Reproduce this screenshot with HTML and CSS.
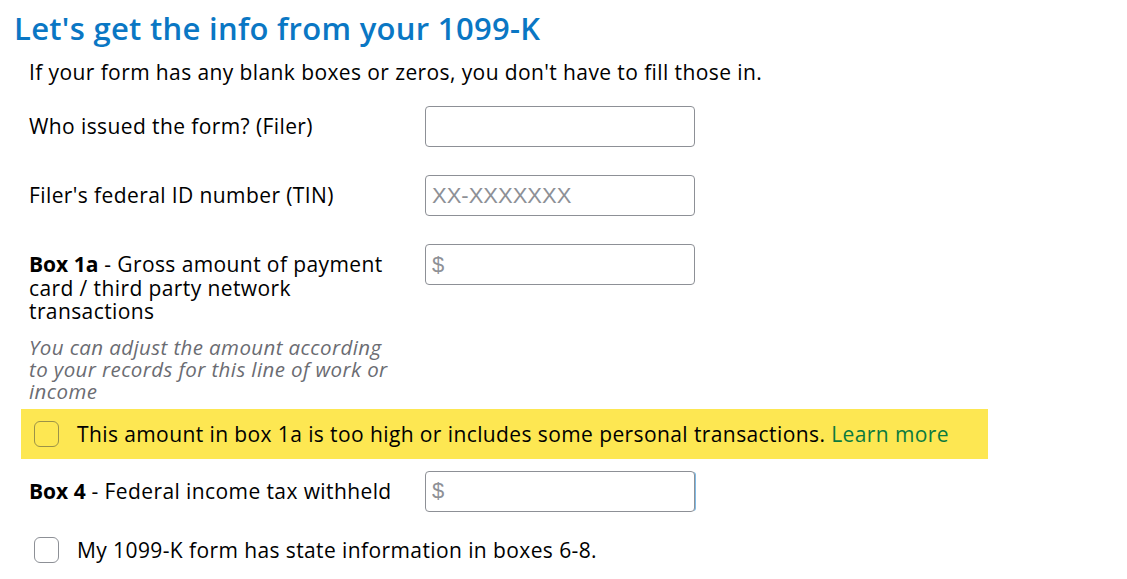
FILE: index.html
```html
<!DOCTYPE html>
<html lang="en">
<head>
<meta charset="utf-8">
<title>1099-K</title>
<link rel="stylesheet" href="styles.css">
</head>
<body>
<main class="page">
  <h1 class="title">Let's get the info from your 1099-K</h1>
  <p class="intro">If your form has any blank boxes or zeros, you don't have to fill those in.</p>

  <div class="row">
    <label class="label" for="filer">Who issued the form? (Filer)</label>
    <input class="field" id="filer" type="text">
  </div>

  <div class="row">
    <label class="label" for="tin">Filer's federal ID number (TIN)</label>
    <input class="field" id="tin" type="text" placeholder="XX-XXXXXXX">
  </div>

  <div class="row">
    <div class="label-block">
      <label class="label" for="box1a"><b>Box 1a</b> - Gross amount of payment card / third party network transactions</label>
      <p class="helper">You can adjust the amount according to your records for this line of work or income</p>
    </div>
    <input class="field" id="box1a" type="text" placeholder="$">
  </div>

  <div class="notice">
    <span class="check check-yellow"></span>
    <span class="notice-text">This amount in box 1a is too high or includes some personal transactions. <a class="link" href="#">Learn more</a></span>
  </div>

  <div class="row row-box4">
    <label class="label label-nowrap" for="box4"><b>Box 4</b> - Federal income tax withheld</label>
    <input class="field field-focus" id="box4" type="text" placeholder="$">
  </div>

  <div class="check-row">
    <span class="check"></span>
    <span class="check-text">My 1099-K form has state information in boxes 6-8.</span>
  </div>
</main>
</body>
</html>
```

FILE: styles.css
```css
* { box-sizing: border-box; }

body {
  margin: 0;
  background: #fff;
  font-family: "Open Sans", "Noto Sans", sans-serif;
  color: #000;
}

.page {
  padding: 8px 0 0 14px;
  width: 1127px;
}

.title {
  margin: 0;
  font-size: 31px;
  line-height: 40px;
  font-weight: 600;
  letter-spacing: 0.3px;
  color: #0a77c4;
}

.intro {
  margin: 12px 0 0 15px;
  font-size: 21px;
  line-height: 24px;
  letter-spacing: 0.4px;
}

.row {
  display: grid;
  grid-template-columns: 396px 270px;
  margin: 22px 0 0 15px;
  align-items: start;
}

.row + .row { margin-top: 28px; }

.label {
  display: block;
  padding-top: 9px;
  font-size: 21px;
  line-height: 23.5px;
  letter-spacing: 0.4px;
  max-width: 362px;
}

.label-nowrap {
  max-width: none;
  white-space: nowrap;
}

.label b { font-weight: 700; letter-spacing: 0; }

.helper {
  margin: 12px 0 0;
  max-width: 366px;
  font-size: 20.5px;
  line-height: 22px;
  letter-spacing: 0.4px;
  font-style: italic;
  color: #6b6c72;
}

.field {
  width: 270px;
  height: 41px;
  border: 1px solid #8d9096;
  border-radius: 4px;
  padding: 0 6px;
  font-family: "Liberation Sans", Arial, sans-serif;
  font-size: 22px;
  background: #fff;
}

.field::placeholder { color: #8d9096; }

.field-focus { box-shadow: 2px 0 0 -1px #7fbbe6; }

.notice {
  display: flex;
  align-items: center;
  gap: 18px;
  margin: 7px 0 0 7px;
  width: 967px;
  height: 50px;
  padding-left: 13px;
  background: #fde752;
}

.check {
  flex: none;
  width: 25px;
  height: 26px;
  border: 1px solid #8d9096;
  border-radius: 6px;
  background: #fff;
}

.check-yellow {
  background: transparent;
  border-color: #9b9248;
}

.notice-text, .check-text {
  font-size: 21px;
  line-height: 24px;
  letter-spacing: 0.4px;
}

.link {
  color: #0b7a3e;
  text-decoration: none;
}

.row.row-box4 { margin-top: 12px; }

.check-row {
  display: flex;
  align-items: center;
  gap: 18px;
  margin: 25px 0 0 20px;
}
```
